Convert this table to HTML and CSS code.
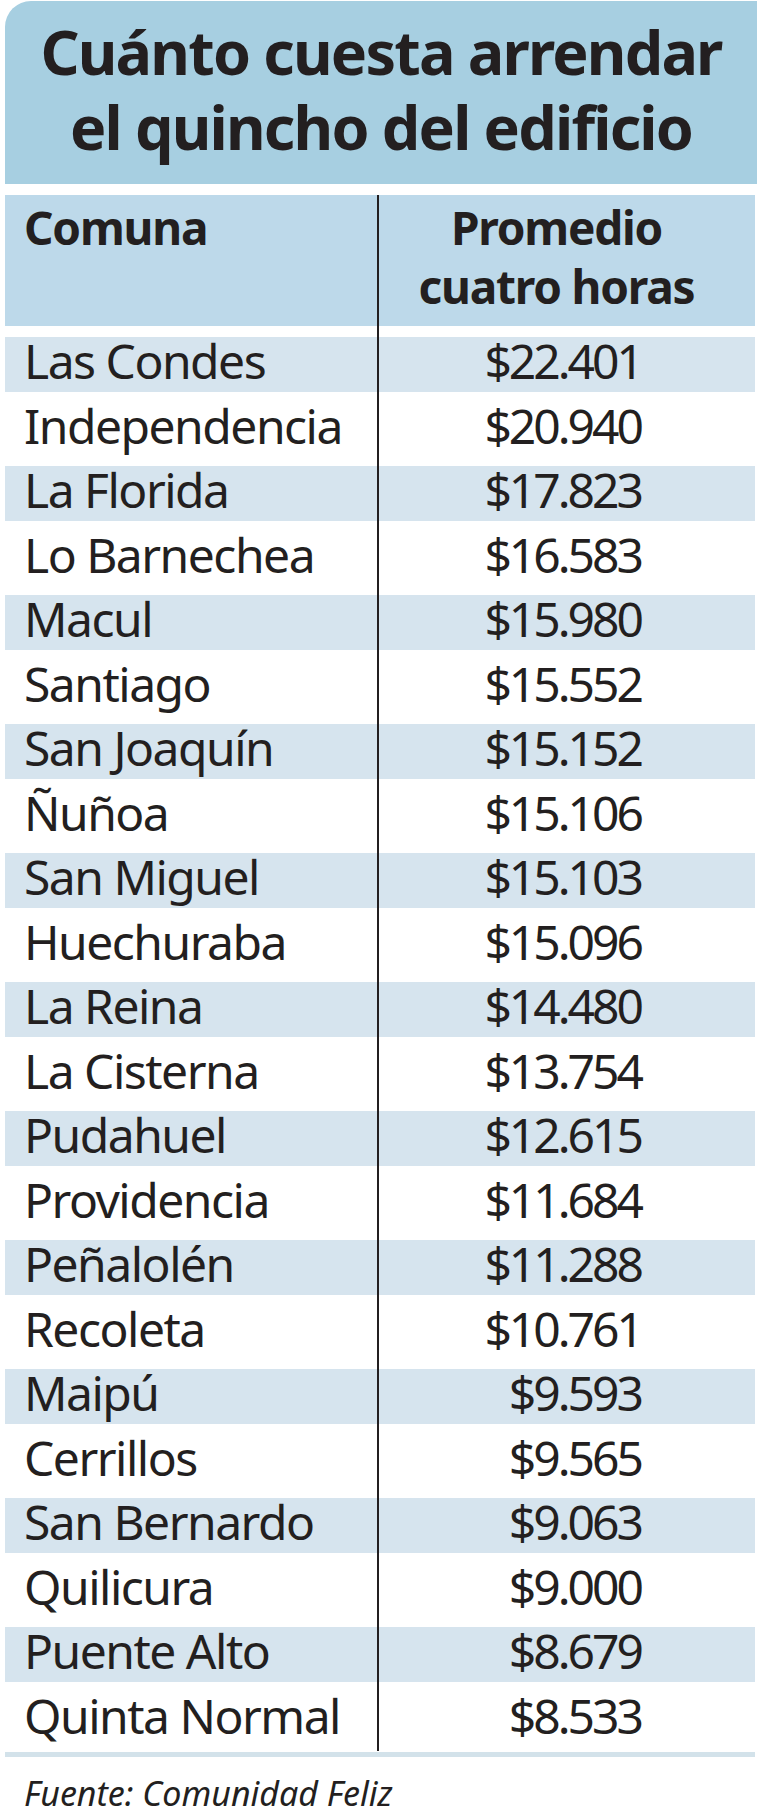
FILE: index.html
```html
<!DOCTYPE html>
<html lang="es">
<head>
<meta charset="utf-8">
<title>Cuánto cuesta arrendar el quincho del edificio</title>
<link rel="stylesheet" href="styles.css">
</head>
<body>
<div class="page">
  <div class="title">
    <h1>Cuánto cuesta arrendar<br>el quincho del edificio</h1>
  </div>
  <div class="table">
    <div class="row head">
      <div class="cell name">Comuna</div>
      <div class="cell value">Promedio<br>cuatro horas</div>
    </div>
    <div class="row shaded"><div class="cell name">Las Condes</div><div class="cell value">$22.401</div></div>
    <div class="row"><div class="cell name">Independencia</div><div class="cell value">$20.940</div></div>
    <div class="row shaded"><div class="cell name">La Florida</div><div class="cell value">$17.823</div></div>
    <div class="row"><div class="cell name">Lo Barnechea</div><div class="cell value">$16.583</div></div>
    <div class="row shaded"><div class="cell name">Macul</div><div class="cell value">$15.980</div></div>
    <div class="row"><div class="cell name">Santiago</div><div class="cell value">$15.552</div></div>
    <div class="row shaded"><div class="cell name">San Joaquín</div><div class="cell value">$15.152</div></div>
    <div class="row"><div class="cell name">Ñuñoa</div><div class="cell value">$15.106</div></div>
    <div class="row shaded"><div class="cell name">San Miguel</div><div class="cell value">$15.103</div></div>
    <div class="row"><div class="cell name">Huechuraba</div><div class="cell value">$15.096</div></div>
    <div class="row shaded"><div class="cell name">La Reina</div><div class="cell value">$14.480</div></div>
    <div class="row"><div class="cell name">La Cisterna</div><div class="cell value">$13.754</div></div>
    <div class="row shaded"><div class="cell name">Pudahuel</div><div class="cell value">$12.615</div></div>
    <div class="row"><div class="cell name">Providencia</div><div class="cell value">$11.684</div></div>
    <div class="row shaded"><div class="cell name">Peñalolén</div><div class="cell value">$11.288</div></div>
    <div class="row"><div class="cell name">Recoleta</div><div class="cell value">$10.761</div></div>
    <div class="row shaded"><div class="cell name">Maipú</div><div class="cell value">$9.593</div></div>
    <div class="row"><div class="cell name">Cerrillos</div><div class="cell value">$9.565</div></div>
    <div class="row shaded"><div class="cell name">San Bernardo</div><div class="cell value">$9.063</div></div>
    <div class="row"><div class="cell name">Quilicura</div><div class="cell value">$9.000</div></div>
    <div class="row shaded"><div class="cell name">Puente Alto</div><div class="cell value">$8.679</div></div>
    <div class="row"><div class="cell name">Quinta Normal</div><div class="cell value">$8.533</div></div>
  </div>
  <div class="bar"></div>
  <p class="source">Fuente: Comunidad Feliz</p>
</div>
</body>
</html>
```
FILE: styles.css
```css
html, body {
  margin: 0;
  padding: 0;
  background: #ffffff;
}

.page {
  width: 758px;
  padding-top: 1px;
  font-family: "Noto Sans", "Open Sans", "Liberation Sans", sans-serif;
  color: #231f20;
}

.title {
  margin-left: 5px;
  width: 752px;
  height: 183px;
  box-sizing: border-box;
  padding-top: 13px;
  background: #a7cfe1;
  border-top-left-radius: 26px;
}

.title h1 {
  margin: 0;
  font-size: 61px;
  line-height: 75px;
  font-weight: 700;
  text-align: center;
  letter-spacing: -1.8px;
}

.table {
  margin-top: 11px;
  margin-left: 5px;
  width: 750px;
}

.row {
  display: grid;
  grid-template-columns: 374px 1fr;
  height: 64.5px;
  font-size: 48px;
  line-height: 58.3px;
  letter-spacing: -1.5px;
}

.row.shaded {
  background: linear-gradient(to bottom,
    transparent 0, transparent 4.75px,
    #d6e4ee 4.75px, #d6e4ee 59.75px,
    transparent 59.75px);
}

.row.head {
  height: 137px;
  font-size: 46px;
  line-height: 59px;
  font-weight: 700;
  letter-spacing: -1.2px;
  background: linear-gradient(to bottom, #bdd9ea 0, #bdd9ea 131px, transparent 131px);
}

.cell {
  box-sizing: border-box;
}

.cell.name {
  padding-left: 19px;
  border-right: 2px solid #231f20;
}

.row .cell.value {
  text-align: right;
  padding-right: 114px;
  letter-spacing: -3px;
  font-variant-numeric: tabular-nums;
}

.row.head .cell {
  padding-top: 3px;
}

.row.head .cell.value {
  text-align: center;
  padding-right: 21px;
  letter-spacing: -1.2px;
}

.bar {
  margin-top: 1px;
  margin-left: 5px;
  width: 750px;
  height: 5px;
  background: #d3e2ea;
}

.source {
  margin: 16px 0 0 0;
  padding-left: 24px;
  font-size: 34px;
  line-height: 40px;
  font-style: italic;
}
```
